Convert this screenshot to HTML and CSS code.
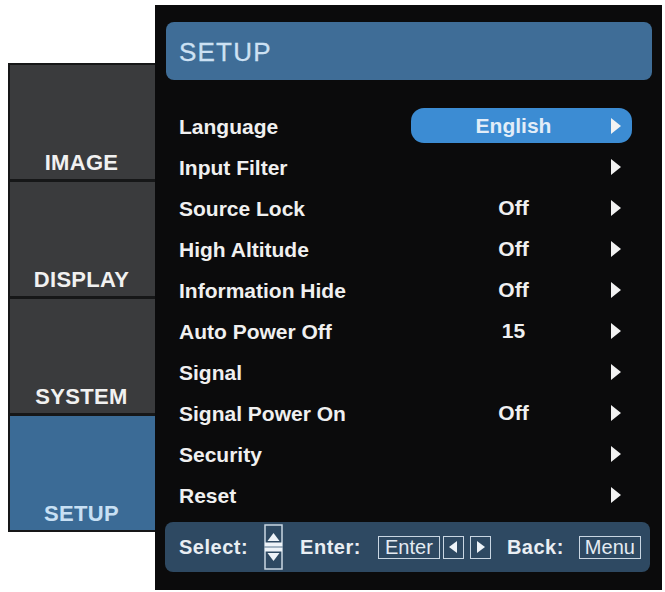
FILE: index.html
```html
<!DOCTYPE html>
<html>
<head>
<meta charset="utf-8">
<link rel="stylesheet" href="styles.css">
</head>
<body>
<div class="screen">
  <nav class="tabs">
    <div class="tab"><span>IMAGE</span></div>
    <div class="tab"><span>DISPLAY</span></div>
    <div class="tab"><span>SYSTEM</span></div>
    <div class="tab active"><span>SETUP</span></div>
  </nav>
  <section class="panel">
    <header class="title">SETUP</header>
    <div class="rows">
      <div class="row"><span class="label">Language</span><span class="cell selected"><span class="val">English</span><span class="arrow"></span></span></div>
      <div class="row"><span class="label">Input Filter</span><span class="cell"><span class="val"></span><span class="arrow"></span></span></div>
      <div class="row"><span class="label">Source Lock</span><span class="cell"><span class="val">Off</span><span class="arrow"></span></span></div>
      <div class="row"><span class="label">High Altitude</span><span class="cell"><span class="val">Off</span><span class="arrow"></span></span></div>
      <div class="row"><span class="label">Information Hide</span><span class="cell"><span class="val">Off</span><span class="arrow"></span></span></div>
      <div class="row"><span class="label">Auto Power Off</span><span class="cell"><span class="val">15</span><span class="arrow"></span></span></div>
      <div class="row"><span class="label">Signal</span><span class="cell"><span class="val"></span><span class="arrow"></span></span></div>
      <div class="row"><span class="label">Signal Power On</span><span class="cell"><span class="val">Off</span><span class="arrow"></span></span></div>
      <div class="row"><span class="label">Security</span><span class="cell"><span class="val"></span><span class="arrow"></span></span></div>
      <div class="row"><span class="label">Reset</span><span class="cell"><span class="val"></span><span class="arrow"></span></span></div>
    </div>
    <footer class="help">
      <span class="hl select">Select:</span>
      <svg class="updown" width="19" height="46" viewBox="0 0 19 46">
        <rect x="1" y="1" width="17" height="21" fill="none" stroke="#c9d6e2" stroke-width="1.5"/>
        <polygon points="3.5,17 15.5,17 9.5,9" fill="#eef3f8"/>
        <rect x="1" y="18.5" width="17" height="3.5" fill="#eef3f8"/>
        <rect x="1" y="24" width="17" height="21" fill="none" stroke="#c9d6e2" stroke-width="1.5"/>
        <rect x="1" y="24" width="17" height="3.5" fill="#eef3f8"/>
        <polygon points="3.5,29 15.5,29 9.5,37" fill="#eef3f8"/>
      </svg>
      <span class="hl enter">Enter:</span>
      <span class="key wide">Enter</span>
      <span class="key small"><svg width="11" height="12" viewBox="0 0 11 12"><polygon points="9,0 9,12 1,6" fill="#eef3f8"/></svg></span>
      <span class="key small right"><svg width="11" height="12" viewBox="0 0 11 12"><polygon points="2,0 2,12 10,6" fill="#eef3f8"/></svg></span>
      <span class="hl back">Back:</span>
      <span class="key wide menu">Menu</span>
    </footer>
  </section>
</div>
</body>
</html>
```
FILE: styles.css
```css
* { box-sizing: border-box; }

html, body {
  margin: 0;
  padding: 0;
  background: #ffffff;
}

body {
  font-family: "Liberation Sans", Arial, sans-serif;
  width: 665px;
  height: 592px;
  overflow: hidden;
}

.screen {
  display: flex;
  align-items: flex-start;
}

/* left navigation */
.tabs {
  margin-top: 63px;
  margin-left: 8px;
  width: 147px;
  height: 469px;
  background: #161718;
  border: 2px solid #161718;
  border-right-width: 0;
  display: flex;
  flex-direction: column;
  gap: 3px;
}

.tab {
  flex: 1;
  background: #3a3b3d;
  display: flex;
  flex-direction: column;
  justify-content: flex-end;
  align-items: center;
  padding-bottom: 5px;
  padding-right: 2px;
}

.tab span {
  font-size: 22px;
  line-height: 22px;
  font-weight: bold;
  color: #f1f1f1;
  letter-spacing: 0.3px;
}

.tab.active {
  background: #3b6b96;
}

.tab.active span {
  color: #c8e0f4;
}

/* main panel */
.panel {
  margin-top: 5px;
  width: 507px;
  height: 585px;
  background: #0b0b0c;
  padding: 17px 10px 0 11px;
  display: flex;
  flex-direction: column;
}

.title {
  height: 58px;
  background: #3f6d97;
  border-radius: 8px;
  padding-left: 13px;
  padding-top: 2px;
  display: flex;
  align-items: center;
  font-size: 26px;
  letter-spacing: 1.2px;
  color: #cde1f3;
  -webkit-text-stroke: 0.3px #cde1f3;
}

.rows {
  margin-top: 26px;
  display: flex;
  flex-direction: column;
}

.row {
  height: 41px;
  display: grid;
  grid-template-columns: 245px 221px;
  align-items: center;
}

.label {
  padding-left: 13px;
  font-size: 21px;
  font-weight: bold;
  letter-spacing: 0;
  color: #f0f0f0;
}

.cell {
  height: 35px;
  display: flex;
  align-items: center;
  border-radius: 13px;
  margin-top: -2px;
}

.cell.selected {
  background: #3c8cd3;
}

.val {
  width: 199px;
  padding-left: 6px;
  text-align: center;
  font-size: 21px;
  font-weight: bold;
  letter-spacing: 0;
  color: #f0f0f0;
}

.selected .val {
  color: #e2edf8;
}

.arrow {
  width: 0;
  height: 0;
  margin-left: 1px;
  border-left: 10px solid #f2f2f2;
  border-top: 8px solid transparent;
  border-bottom: 8px solid transparent;
}

/* help bar */
.help {
  margin-top: 6px;
  margin-right: 2px;
  margin-left: -1px;
  height: 50px;
  background: #2e4962;
  border-radius: 8px;
  display: flex;
  align-items: center;
  padding-left: 14px;
}

.hl {
  font-size: 20px;
  font-weight: bold;
  letter-spacing: 0.5px;
  color: #e9eef3;
}

.updown {
  margin-left: 16px;
  display: block;
}

.enter {
  margin-left: 17px;
}

.key {
  height: 23px;
  border: 1.5px solid #c9d6e2;
  display: flex;
  align-items: center;
  justify-content: center;
  color: #e4ebf2;
  font-size: 20px;
  letter-spacing: 0;
  line-height: 20px;
}

.key.wide {
  width: 62px;
  margin-left: 17px;
}

.key.small {
  width: 21px;
  margin-left: 3px;
}

.key.small.right {
  margin-left: 6px;
}

.back {
  margin-left: 16px;
}

.key.menu {
  margin-left: 15px;
}
```
